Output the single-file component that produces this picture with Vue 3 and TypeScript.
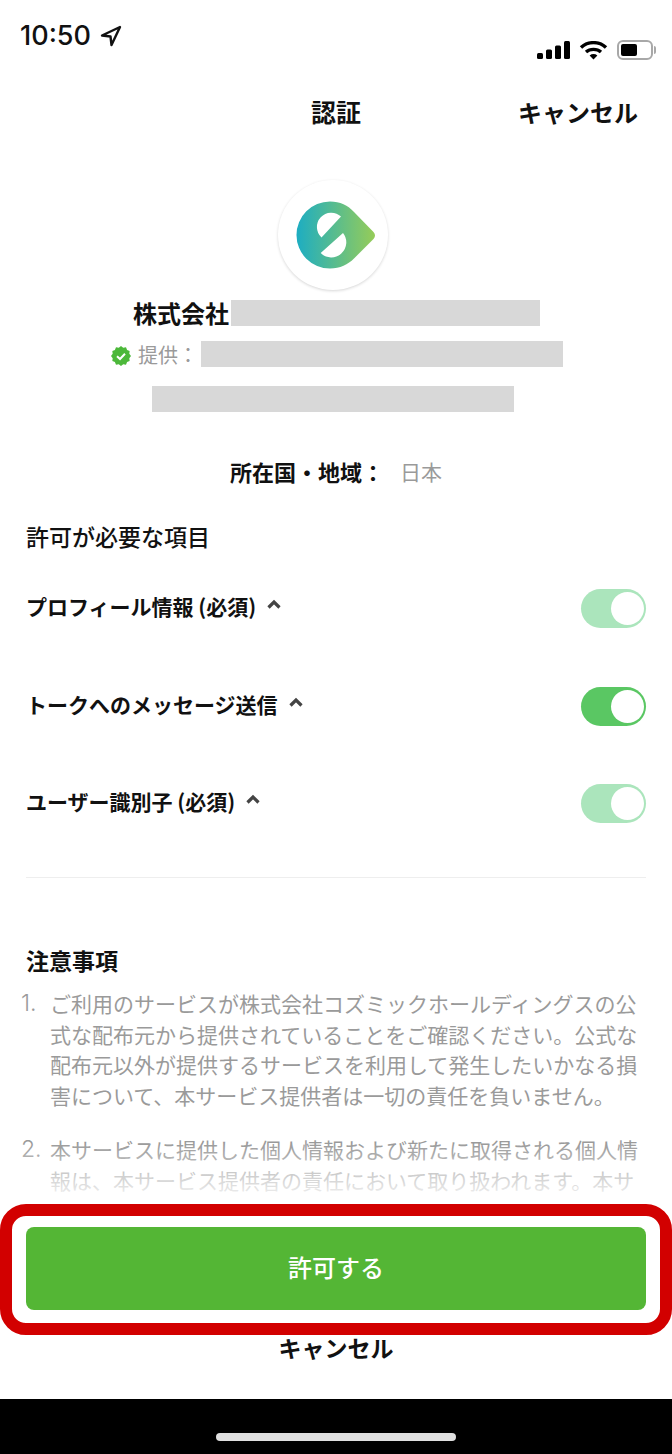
<template>
  <div class="screen">
    <div class="status">
      <div class="time">
        <span>10:50</span>
        <svg class="arrow" width="22" height="22" viewBox="0 0 22 22">
          <path d="M20 2 L2 10.5 L10.5 11.5 L11.5 20 Z" fill="none" stroke="#111" stroke-width="2.4" stroke-linejoin="round" />
        </svg>
      </div>
      <div class="status-icons">
        <svg width="33" height="18" viewBox="0 0 33 18">
          <rect x="0" y="12" width="6" height="6" rx="1.5" fill="#000" />
          <rect x="9" y="8.5" width="6" height="9.5" rx="1.5" fill="#000" />
          <rect x="18" y="4.5" width="6" height="13.5" rx="1.5" fill="#000" />
          <rect x="27" y="0" width="6" height="18" rx="1.5" fill="#000" />
        </svg>
        <svg width="29" height="19" viewBox="0 0 29 19">
          <path d="M2 6.5 C9 0 20 0 27 6.5" fill="none" stroke="#000" stroke-width="3.4" />
          <path d="M7 11 C11 7.5 18 7.5 22 11" fill="none" stroke="#000" stroke-width="3.4" />
          <path d="M10.6 14.4 L14.5 18.6 L18.4 14.4 C16 12.6 13 12.6 10.6 14.4 Z" fill="#000" />
        </svg>
        <div class="battery"><div class="battery-level"></div></div>
      </div>
    </div>

    <header class="nav">
      <div class="nav-title">認証</div>
      <div class="nav-cancel">キャンセル</div>
    </header>

    <main class="content">
      <div class="logo">
        <svg width="110" height="110" viewBox="0 0 110 110">
          <defs>
            <linearGradient id="logoGrad" x1="0" y1="0" x2="1" y2="0">
              <stop offset="0" stop-color="#1dadc2" />
              <stop offset="1" stop-color="#96cc58" />
            </linearGradient>
          </defs>
          <path d="M52 21.5 A33.5 33.5 0 1 0 52 88.5 C62 88.5 70 84.5 76 78.5 L95.5 59 Q98.5 55.5 95.5 52 L76 32 C70 25.5 62 21.5 52 21.5 Z" fill="url(#logoGrad)" />
          <path d="M63 36.5 L43.5 57.5 A14.3 14.3 0 0 1 63 36.5 Z" fill="#fff" />
          <path d="M65 53 L42.7 73 A15 15 0 0 0 65 53 Z" fill="#fff" />
        </svg>
      </div>

      <div class="name-row">
        <span class="name">株式会社</span>
        <div class="mask name-mask"></div>
      </div>
      <div class="provider-row">
        <svg class="verified" width="20" height="20" viewBox="0 0 20 20">
          <polygon :points="badgePoints" fill="#4cb83a" />
          <path d="M6 10.3 L9 13 L14 7.8" fill="none" stroke="#fff" stroke-width="2" />
        </svg>
        <span class="provider-label">提供：</span>
        <div class="mask provider-mask"></div>
      </div>
      <div class="mask third-mask"></div>

      <div class="location">
        <span class="location-label">所在国・地域：</span>
        <span class="location-value">日本</span>
      </div>

      <h2 class="section-title">許可が必要な項目</h2>
      <div class="permissions">
        <div class="permission" v-for="item in permissions" :key="item.label">
          <div class="permission-label">
            <span>{{ item.label }}</span>
            <svg class="chevron" width="14" height="10" viewBox="0 0 14 10">
              <path d="M1.5 8.5 L7 3 L12.5 8.5" fill="none" stroke="#444" stroke-width="3.2" />
            </svg>
          </div>
          <div class="toggle" :class="{ locked: item.required }"><div class="knob"></div></div>
        </div>
      </div>

      <div class="divider"></div>

      <h2 class="notes-title">注意事項</h2>
      <ol class="notes">
        <li v-for="(note, index) in notes" :key="index">
          <span class="num">{{ index + 1 }}.</span>
          <p>{{ note }}</p>
        </li>
      </ol>
      <div class="fade"></div>
    </main>

    <footer class="footer">
      <button class="allow">許可する</button>
      <div class="footer-cancel">キャンセル</div>
      <div class="highlight"></div>
    </footer>

    <div class="home-bar"><div class="home-indicator"></div></div>
  </div>
</template>

<script setup lang="ts">
const permissions = [
  { label: 'プロフィール情報 (必須)', required: true },
  { label: 'トークへのメッセージ送信', required: false },
  { label: 'ユーザー識別子 (必須)', required: true },
]

const notes = [
  'ご利用のサービスが株式会社コズミックホールディングスの公式な配布元から提供されていることをご確認ください。公式な配布元以外が提供するサービスを利用して発生したいかなる損害について、本サービス提供者は一切の責任を負いません。',
  '本サービスに提供した個人情報および新たに取得される個人情報は、本サービス提供者の責任において取り扱われます。本サ',
]

// scalloped edge of the verified badge
const badgePoints = Array.from({ length: 24 }, (_, i) => {
  const r = i % 2 === 0 ? 10 : 8.6
  const a = (i / 24) * Math.PI * 2
  return `${(10 + r * Math.cos(a)).toFixed(2)},${(10 + r * Math.sin(a)).toFixed(2)}`
}).join(' ')
</script>

<style>
html,
body {
  margin: 0;
  background: #fff;
}
</style>

<style scoped>
* {
  box-sizing: border-box;
}
.screen {
  width: 672px;
  height: 1454px;
  display: flex;
  flex-direction: column;
  overflow: hidden;
  background: #fff;
  color: #111;
  font-family: "Noto Sans CJK JP", "Noto Sans", sans-serif;
}

/* status bar */
.status {
  height: 80px;
  flex-shrink: 0;
  display: flex;
  justify-content: space-between;
  padding: 0 19px 0 20px;
}
.time {
  display: flex;
  align-items: center;
  gap: 9px;
  height: 70px;
  font-family: Inter, sans-serif;
  font-size: 27px;
  font-weight: 500;
}
.arrow {
  margin-top: 1px;
}
.status-icons {
  display: flex;
  align-items: center;
  gap: 9px;
  height: 100px;
}
.battery {
  position: relative;
  width: 36px;
  height: 20px;
  border: 2px solid #a8a8a8;
  border-radius: 6px;
  padding: 2px;
}
.battery::after {
  content: "";
  position: absolute;
  right: -5px;
  top: 4px;
  width: 2px;
  height: 8px;
  border-radius: 0 2px 2px 0;
  background: #a8a8a8;
}
.battery-level {
  width: 16px;
  height: 12px;
  background: #000;
  border-radius: 2px;
}

/* nav */
.nav {
  height: 68px;
  flex-shrink: 0;
  position: relative;
  display: flex;
  align-items: center;
  justify-content: center;
  padding-bottom: 6px;
  font-size: 24px;
  font-weight: 700;
}
.nav-title {
  font-size: 25px;
}
.nav-cancel {
  position: absolute;
  right: 34px;
}

/* body */
.content {
  flex: 1;
  min-height: 0;
  position: relative;
  overflow: hidden;
  padding: 32px 26px 0;
  display: flex;
  flex-direction: column;
  align-items: center;
}
.logo {
  width: 110px;
  height: 110px;
  flex-shrink: 0;
  margin-left: -6px;
  border-radius: 50%;
  background: #fff;
  box-shadow: 0 1px 3px rgba(0, 0, 0, 0.16);
}
.logo svg {
  display: block;
}
.mask {
  height: 26px;
  flex-shrink: 0;
  background: #d8d8d8;
}
.name-row {
  align-self: flex-start;
  display: flex;
  align-items: flex-start;
  gap: 2px;
  height: 26px;
  margin: 10px 0 0 107px;
  flex-shrink: 0;
}
.name {
  font-size: 24px;
  font-weight: 700;
  line-height: 26px;
}
.name-mask {
  width: 309px;
}
.provider-row {
  align-self: flex-start;
  display: flex;
  align-items: center;
  height: 26px;
  margin: 15px 0 0 85px;
  flex-shrink: 0;
}
.verified {
  margin: 4px 7px 0 0;
}
.provider-label {
  width: 63px;
  font-size: 20px;
  color: #9a9a9a;
}
.provider-mask {
  width: 362px;
}
.third-mask {
  align-self: flex-start;
  width: 362px;
  margin: 19px 0 0 126px;
}
.location {
  display: flex;
  align-items: center;
  height: 30px;
  margin-top: 47px;
  padding-bottom: 6px;
  flex-shrink: 0;
}
.location-label {
  width: 170px;
  font-size: 22px;
  font-weight: 700;
  white-space: nowrap;
}
.location-value {
  font-size: 21px;
  color: #9a9a9a;
}
.section-title,
.notes-title {
  align-self: stretch;
  margin: 34px 0 0;
  height: 30px;
  line-height: 26px;
  font-size: 23px;
  font-weight: 500;
  flex-shrink: 0;
}
.notes-title {
  margin-top: 69px;
  font-weight: 700;
}
.permissions {
  align-self: stretch;
  display: flex;
  flex-direction: column;
  gap: 58.5px;
  margin-top: 36px;
  flex-shrink: 0;
}
.permission {
  display: flex;
  align-items: center;
  justify-content: space-between;
  height: 39px;
}
.permission-label {
  display: flex;
  align-items: center;
  gap: 11px;
  padding-bottom: 5px;
  font-size: 21px;
  font-weight: 700;
}
.chevron {
  margin-top: -4px;
}
.toggle {
  width: 65px;
  height: 39px;
  border-radius: 20px;
  background: #5ac763;
  padding: 3px 2px 3px 30px;
}
.toggle.locked {
  background: #abe5bc;
}
.knob {
  width: 33px;
  height: 33px;
  border-radius: 50%;
  background: #fff;
}
.divider {
  align-self: stretch;
  height: 1px;
  margin-top: 54px;
  background: #eeeeee;
  flex-shrink: 0;
}
.notes {
  align-self: stretch;
  list-style: none;
  margin: 11px -12px 0 -5px;
  padding: 0;
  flex-shrink: 0;
}
.notes li {
  display: flex;
  margin-bottom: 23px;
  font-size: 21px;
  line-height: 30.7px;
  color: #9a9a9a;
}
.num {
  width: 29px;
  flex-shrink: 0;
  font-family: Inter, sans-serif;
  font-size: 23px;
  font-weight: 300;
}
.notes p {
  margin: 0;
  width: 588px;
}
.fade {
  position: absolute;
  left: 0;
  right: 0;
  bottom: 0;
  height: 62px;
  background: linear-gradient(rgba(255, 255, 255, 0), #fff);
}

/* bottom actions */
.footer {
  height: 194px;
  flex-shrink: 0;
  position: relative;
  padding: 22px 26px 0;
  background: #fff;
  display: flex;
  flex-direction: column;
  align-items: center;
}
.allow {
  width: 100%;
  height: 83px;
  padding-bottom: 5px;
  border: none;
  border-radius: 8px;
  background: #54b635;
  color: #fff;
  font-family: inherit;
  font-size: 24px;
  font-weight: 500;
}
.footer-cancel {
  margin-top: 21px;
  font-size: 23px;
  font-weight: 700;
  line-height: 32px;
}
.highlight {
  position: absolute;
  left: 0;
  top: -1px;
  width: 672px;
  height: 131px;
  border: 12px solid #d20000;
  border-radius: 26px;
  pointer-events: none;
}
.home-bar {
  height: 55px;
  flex-shrink: 0;
  background: #000;
  display: flex;
  justify-content: center;
  align-items: flex-end;
  padding-bottom: 13px;
}
.home-indicator {
  width: 240px;
  height: 8px;
  border-radius: 4px;
  background: #e0e0e0;
}
</style>
